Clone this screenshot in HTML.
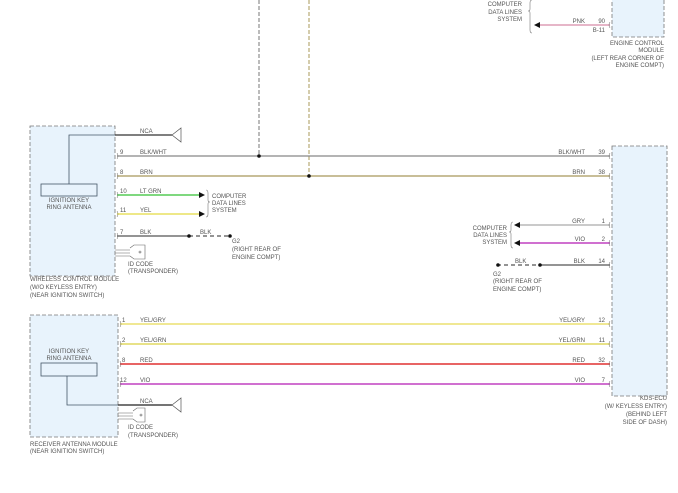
<!DOCTYPE html>
<html><head><meta charset="utf-8"><style>
html,body{margin:0;padding:0;background:#fff;width:678px;height:493px;overflow:hidden}
svg text{font-family:"Liberation Sans",sans-serif;font-size:6px;fill:#555}
</style></head><body>
<svg width="678" height="493" viewBox="0 0 678 493" xmlns="http://www.w3.org/2000/svg">
<g fill="#e8f3fc" stroke="#777" stroke-width="0.8" stroke-dasharray="4,2">
<rect x="30" y="126" width="85" height="150"/>
<rect x="30" y="315" width="88" height="122"/>
<rect x="612" y="-2" width="52" height="39"/>
<rect x="612" y="146" width="55" height="250"/>
</g>
<line x1="259" y1="0" x2="259" y2="156" stroke="#777" stroke-width="1" stroke-dasharray="4,2"/>
<line x1="309" y1="0" x2="309" y2="176" stroke="#a89a5a" stroke-width="1" stroke-dasharray="4,2"/>
<g stroke-width="1.3" fill="none">
<line x1="115" y1="135" x2="172" y2="135" stroke="#333"/>
<line x1="117" y1="156" x2="610" y2="156" stroke="#888"/>
<line x1="117" y1="176" x2="610" y2="176" stroke="#a8985a"/>
<line x1="117" y1="195" x2="200" y2="195" stroke="#55cc55" stroke-width="1.6"/>
<line x1="117" y1="214" x2="200" y2="214" stroke="#e8e060" stroke-width="1.6"/>
<line x1="117" y1="236" x2="189" y2="236" stroke="#555"/>
<line x1="189" y1="236" x2="230" y2="236" stroke="#555" stroke-dasharray="4,3"/>
<line x1="538" y1="25" x2="610" y2="25" stroke="#d88aa8"/>
<line x1="518" y1="225" x2="610" y2="225" stroke="#aaa"/>
<line x1="518" y1="243" x2="610" y2="243" stroke="#c040c0" stroke-width="1.6"/>
<line x1="540" y1="265" x2="610" y2="265" stroke="#555"/>
<line x1="497" y1="265" x2="540" y2="265" stroke="#555" stroke-dasharray="4,3"/>
<line x1="120" y1="324" x2="610" y2="324" stroke="#ece070" stroke-width="1.6"/>
<line x1="120" y1="344" x2="610" y2="344" stroke="#e0d860" stroke-width="1.6"/>
<line x1="120" y1="364" x2="610" y2="364" stroke="#e03030" stroke-width="1.4"/>
<line x1="120" y1="384" x2="610" y2="384" stroke="#c040c0" stroke-width="1.6"/>
<line x1="118" y1="405" x2="172" y2="405" stroke="#222"/>
<polyline points="69,184 69,135 115,135" stroke="#456" stroke-width="0.8"/>
<polyline points="67,376 67,405 118,405" stroke="#456" stroke-width="0.8"/>
<polygon points="172,135 181,128 181,142" stroke="#555" stroke-width="0.7"/>
<polygon points="172,405 181,398 181,412" stroke="#555" stroke-width="0.7"/>
<path d="M206,190 q2,0 2,3 v7 q0,2 2,2 q-2,0 -2,2 v10 q0,3 -2,3" stroke="#777" stroke-width="0.6"/>
<path d="M532,0 q-2,0 -2,3 v6 q0,2 -2,2 q2,0 2,2 v17 q0,3 2,3" stroke="#777" stroke-width="0.6"/>
<path d="M513,222 q-2,0 -2,3 v5 q0,2 -2,2 q2,0 2,2 v11 q0,3 2,3" stroke="#777" stroke-width="0.6"/>
</g>
<rect x="41" y="184" width="56" height="12" fill="#e8f3fc" stroke="#456" stroke-width="0.8"/>
<rect x="41" y="363" width="56" height="13" fill="#e8f3fc" stroke="#456" stroke-width="0.8"/>
<g fill="#111">
<polygon points="205,195 199,192 199,198"/>
<polygon points="205,214 199,211 199,217"/>
<polygon points="534,25 540,22 540,28"/>
<polygon points="514,225 520,222 520,228"/>
<polygon points="514,243 520,240 520,246"/>
<circle cx="259" cy="156" r="1.8"/><circle cx="309" cy="176" r="1.8"/>
<circle cx="189" cy="236" r="1.8"/><circle cx="230" cy="236" r="1.8"/>
<circle cx="540" cy="265" r="1.8"/><circle cx="498" cy="265" r="1.8"/>
</g>
<g fill="none" stroke="#666" stroke-width="0.6">
<path d="M115,250 h15 M115,253 h15 M115,256 h15 M130,248 l4,-3 h11 v14 h-11 l-4,-3"/>
<circle cx="140" cy="252" r="1"/>
<path d="M118,413 h15 M118,416 h15 M118,419 h15 M133,411 l4,-3 h8 v14 h-8 l-4,-3"/>
<circle cx="141" cy="415" r="1"/>
</g>
<g fill="none" stroke="#666" stroke-width="0.5">
<path d="M117,153 q2,3 0,6 M117,173 q2,3 0,6 M117,192 q2,3 0,6 M117,211 q2,3 0,6 M117,233 q2,3 0,6"/>
<path d="M120,321 q2,3 0,6 M120,341 q2,3 0,6 M120,361 q2,3 0,6 M120,381 q2,3 0,6"/>
<path d="M610,22 q-2,3 0,6 M610,153 q-2,3 0,6 M610,173 q-2,3 0,6 M610,222 q-2,3 0,6 M610,240 q-2,3 0,6 M610,262 q-2,3 0,6"/>
<path d="M610,321 q-2,3 0,6 M610,341 q-2,3 0,6 M610,361 q-2,3 0,6 M610,381 q-2,3 0,6"/>
</g>
<text x="140" y="133">NCA</text>
<text x="120" y="154">9</text><text x="140" y="154">BLK/WHT</text>
<text x="120" y="174">8</text><text x="140" y="174">BRN</text>
<text x="120" y="193">10</text><text x="140" y="193">LT GRN</text>
<text x="120" y="212">11</text><text x="140" y="212">YEL</text>
<text x="120" y="234">7</text><text x="140" y="234">BLK</text><text x="200" y="234">BLK</text>
<text x="212" y="198">COMPUTER</text><text x="212" y="205">DATA LINES</text><text x="212" y="212">SYSTEM</text>
<text x="232" y="243">G2</text><text x="232" y="251">(RIGHT REAR OF</text><text x="232" y="259">ENGINE COMPT)</text>
<text x="128" y="266">ID CODE</text><text x="128" y="273">(TRANSPONDER)</text>
<text x="69" y="202" text-anchor="middle">IGNITION KEY</text><text x="69" y="209" text-anchor="middle">RING ANTENNA</text>
<text x="30" y="281">WIRELESS CONTROL MODULE</text><text x="30" y="289">(W/O KEYLESS ENTRY)</text><text x="30" y="297">(NEAR IGNITION SWITCH)</text>
<g text-anchor="end">
<text x="522" y="6">COMPUTER</text><text x="522" y="14">DATA LINES</text><text x="522" y="21">SYSTEM</text>
<text x="585" y="23">PNK</text><text x="605" y="23">90</text><text x="605" y="32">B-11</text>
<text x="664" y="45">ENGINE CONTROL</text><text x="664" y="52">MODULE</text><text x="664" y="60">(LEFT REAR CORNER OF</text><text x="664" y="67">ENGINE COMPT)</text>
<text x="585" y="154">BLK/WHT</text><text x="605" y="154">39</text>
<text x="585" y="174">BRN</text><text x="605" y="174">38</text>
<text x="585" y="223">GRY</text><text x="605" y="223">1</text>
<text x="585" y="241">VIO</text><text x="605" y="241">2</text>
<text x="585" y="263">BLK</text><text x="605" y="263">14</text>
<text x="507" y="230">COMPUTER</text><text x="507" y="237">DATA LINES</text><text x="507" y="244">SYSTEM</text>
<text x="585" y="322">YEL/GRY</text><text x="605" y="322">12</text>
<text x="585" y="342">YEL/GRN</text><text x="605" y="342">11</text>
<text x="585" y="362">RED</text><text x="605" y="362">32</text>
<text x="585" y="382">VIO</text><text x="605" y="382">7</text>
<text x="667" y="400">KDS-ECU</text><text x="667" y="408">(W/ KEYLESS ENTRY)</text><text x="667" y="416">(BEHIND LEFT</text><text x="667" y="424">SIDE OF DASH)</text>
</g>
<text x="515" y="263">BLK</text>
<text x="493" y="276">G2</text><text x="493" y="283">(RIGHT REAR OF</text><text x="493" y="291">ENGINE COMPT)</text>
<text x="122" y="322">1</text><text x="140" y="322">YEL/GRY</text>
<text x="122" y="342">2</text><text x="140" y="342">YEL/GRN</text>
<text x="122" y="362">8</text><text x="140" y="362">RED</text>
<text x="120" y="382">12</text><text x="140" y="382">VIO</text>
<text x="140" y="403">NCA</text>
<text x="69" y="353" text-anchor="middle">IGNITION KEY</text><text x="69" y="360" text-anchor="middle">RING ANTENNA</text>
<text x="128" y="429">ID CODE</text><text x="128" y="437">(TRANSPONDER)</text>
<text x="30" y="446">RECEIVER ANTENNA MODULE</text><text x="30" y="453">(NEAR IGNITION SWITCH)</text>
</svg>
</body></html>
